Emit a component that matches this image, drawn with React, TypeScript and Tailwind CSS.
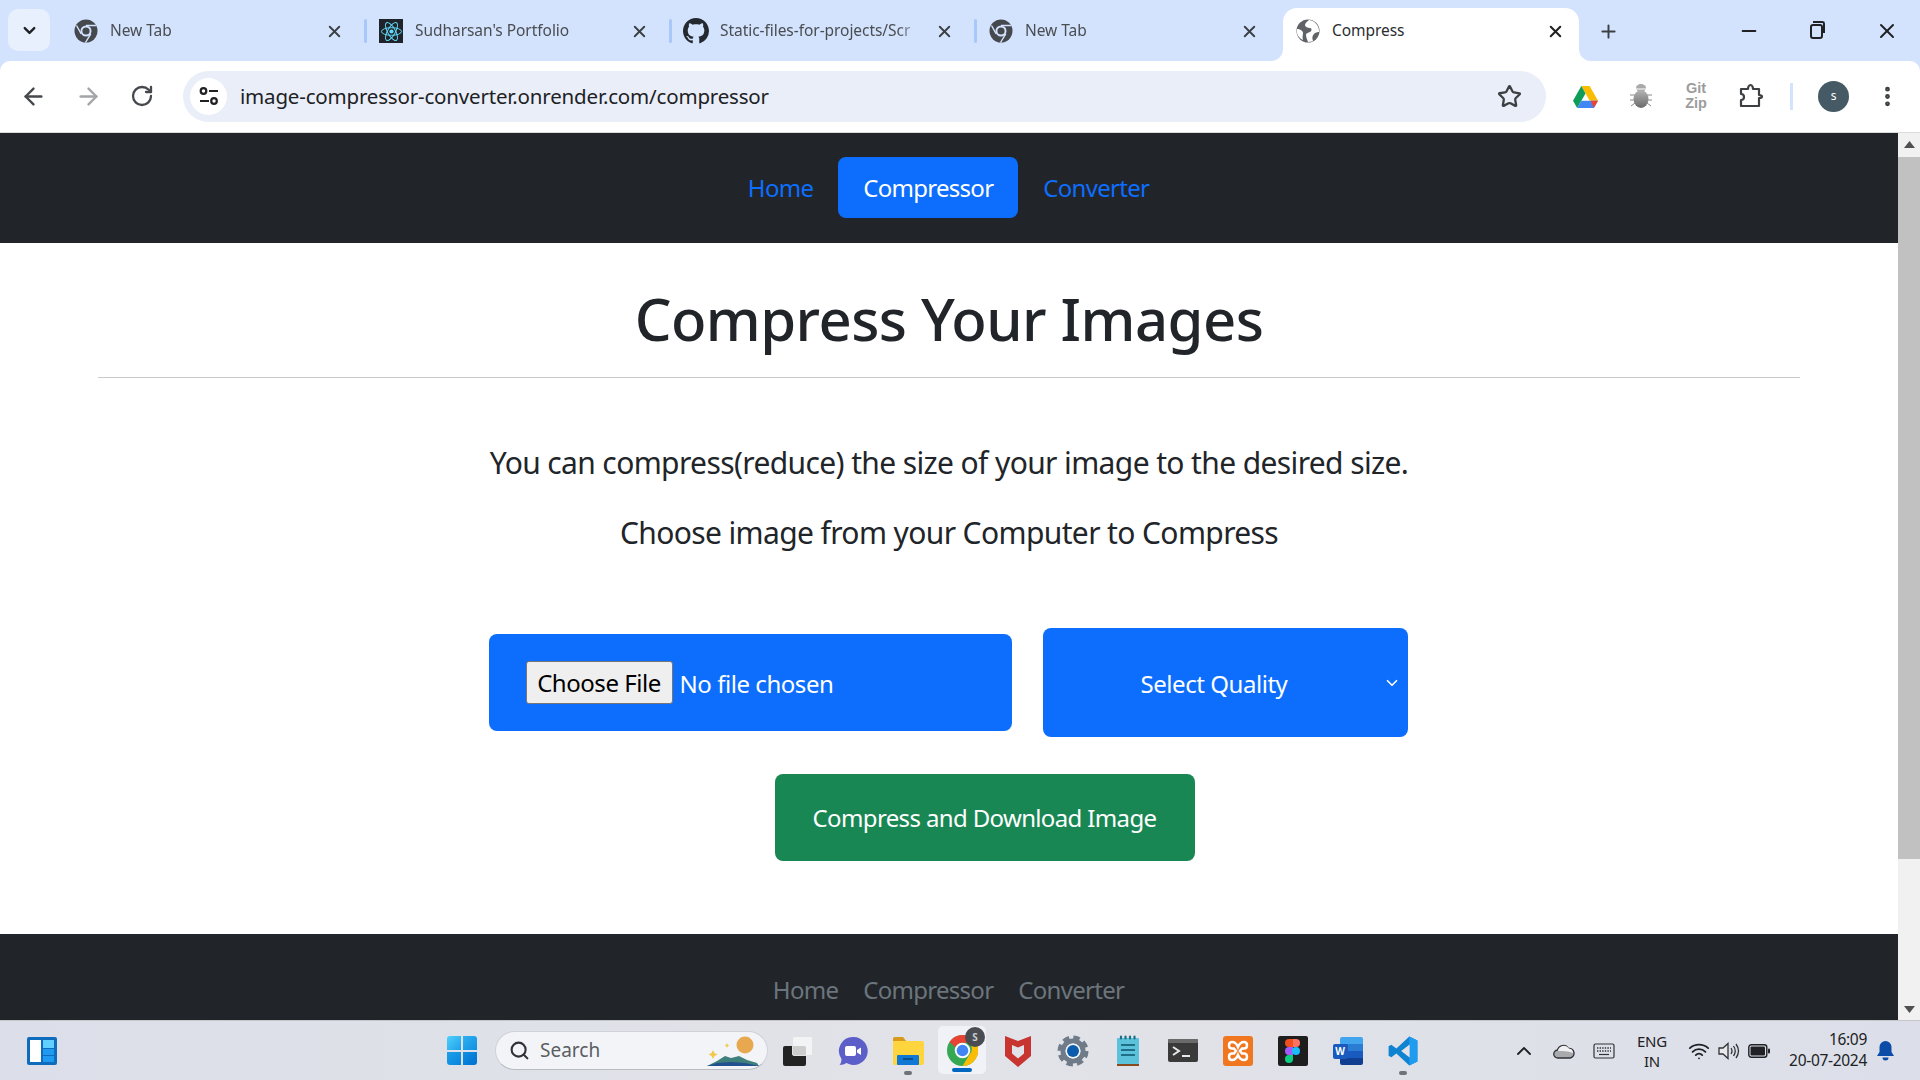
import React from "react";
import { ArrowLeft, ArrowRight, RotateCw, Star, X, Plus, Minus, Search, ChevronUp, ChevronDown, Wifi, EllipsisVertical } from "lucide-react";

const sans = "font-['Noto_Sans','Open_Sans',sans-serif]";

const ChromeIcon = () => (
  <svg width="24" height="24" viewBox="0 0 24 24">
    <circle cx="12" cy="12" r="11.5" fill="#45494e" />
    <circle cx="12" cy="12" r="5.5" fill="#d3e3fd" />
    <circle cx="12" cy="12" r="3.6" fill="#45494e" />
    <path d="M12 6.5h10M7.2 14.8 2.5 6.5M16.8 14.8 11.500 23.500" stroke="#d3e3fd" strokeWidth="1.4" />
  </svg>
);

const ReactIcon = () => (
  <div className="w-[24px] h-[24px] bg-[#20232a] flex items-center justify-center">
    <svg width="23" height="23" viewBox="-12 -12 24 24" fill="none" stroke="#61dafb" strokeWidth="1">
      <circle r="2.2" fill="#61dafb" stroke="none" />
      <ellipse rx="10.500" ry="4" />
      <ellipse rx="10.500" ry="4" transform="rotate(60)" />
      <ellipse rx="10.500" ry="4" transform="rotate(120)" />
    </svg>
  </div>
);

const GithubIcon = () => (
  <svg width="26" height="26" viewBox="0 0 16 16" fill="#24292f">
    <path d="M8 0C3.58 0 0 3.58 0 8c0 3.54 2.29 6.53 5.47 7.59.4.07.55-.17.55-.38 0-.19-.01-.82-.01-1.49-2.01.37-2.53-.49-2.69-.94-.09-.23-.48-.94-.82-1.13-.28-.15-.68-.52-.01-.53.63-.01 1.08.58 1.23.82.72 1.21 1.87.87 2.33.66.07-.52.28-.87.51-1.07-1.78-.2-3.64-.89-3.64-3.95 0-.87.31-1.59.82-2.15-.08-.2-.36-1.02.08-2.12 0 0 .67-.21 2.2.82.64-.18 1.32-.27 2-.27s1.36.09 2 .27c1.53-1.04 2.2-.82 2.2-.82.44 1.1.16 1.92.08 2.12.51.56.82 1.27.82 2.15 0 3.07-1.87 3.75-3.65 3.95.29.25.54.73.54 1.48 0 1.07-.01 1.93-.01 2.2 0 .21.15.46.55.38A8.01 8.01 0 0 0 16 8c0-4.42-3.58-8-8-8z" />
  </svg>
);

const GlobeIcon = () => (
  <svg width="24" height="24" viewBox="0 0 24 24" className="shrink-0">
    <circle cx="12" cy="12" r="11.500" fill="#5f6368" />
    <path d="M13 1c-2 2-4 3-4 5s3 3 5 3 2 3 0 4-4 1-4 3 1 4 2 7c3 0 5-1 5-1-1-3-1-5 1-7s5-2 5-2c.5-5-3-11-10-12zM1 10c3 0 6 2 6 4s-1 4 0 7c-4-2-7-6-6-11z" fill="#ffffff" />
  </svg>
);

const tabs = [
  { title: "New Tab", icon: <ChromeIcon /> },
  { title: "Sudharsan's Portfolio", icon: <ReactIcon /> },
  { title: "Static-files-for-projects/Scr", icon: <GithubIcon /> },
  { title: "New Tab", icon: <ChromeIcon /> },
];

const Tab = ({ title, icon, last }: { title: string; icon: React.ReactNode; last: boolean }) => (
  <div className="w-[305px] h-[53px] flex items-center pl-[11px] pr-[23px] pb-[7px] relative">
    <div className="w-[26px] flex justify-center shrink-0">{icon}</div>
    <span className="ml-[11px] flex-1 overflow-hidden whitespace-nowrap text-[15.5px] tracking-[-0.05px] text-[#4a4d51] [mask-image:linear-gradient(to_right,black_88%,transparent)]">{title}</span>
    <X size={19} strokeWidth={2.4} className="text-[#3c4043] shrink-0 ml-[13px]" />
    {!last && <div className="absolute right-0 top-[11px] w-[3px] h-[24px] rounded bg-[#a8c7fa]" />}
  </div>
);

const DriveIcon = () => (
  <svg width="25" height="23" viewBox="0 0 24 22">
    <path d="M8 1h8l8 14h-8z" fill="#fbbc04" />
    <path d="M8 1 0 15l4 7 8-14z" fill="#0f9d58" />
    <path d="M4 22h16l4-7H8z" fill="#4285f4" />
    <path d="M20 22l4-7h-7z" fill="#ea4335" />
  </svg>
);

const BugIcon = () => (
  <svg width="24" height="26" viewBox="0 0 24 26">
    <defs>
      <linearGradient id="bugBody" x1="0" y1="0" x2="0" y2="1">
        <stop offset="0" stopColor="#b5b5b5" />
        <stop offset="1" stopColor="#6a6a6a" />
      </linearGradient>
    </defs>
    <path d="M1 12h5M1 17h5M2 23l4-3M23 12h-5M23 17h-5M22 23l-4-3" stroke="#8a8a8a" strokeWidth="1" />
    <ellipse cx="12" cy="5" rx="5" ry="4" fill="#a9a9a9" />
    <path d="M7 6h10" stroke="#ffffff" strokeWidth="1" />
    <ellipse cx="12" cy="16" rx="7.500" ry="9" fill="url(#bugBody)" />
  </svg>
);

const ExtensionIcon = () => (
  <svg width="26" height="26" viewBox="0 0 26 26" fill="none" stroke="#3c4043" strokeWidth="2.200" strokeLinejoin="round">
    <path d="M3 6h7c0-2 1-4 2.500-4S15 4 15 6h6v6c2 0 3 .5 3 1.500S23 15 21 15v8H3v-6c2 0 3-1 3-3s-1-3-3-3z" />
  </svg>
);

const TuneIcon = () => (
  <svg width="22" height="22" viewBox="0 0 22 22" fill="none" stroke="#202124" strokeWidth="2.200">
    <circle cx="5.500" cy="6" r="2.800" />
    <path d="M11 6h9M2 16h9" />
    <circle cx="16" cy="16" r="2.800" />
  </svg>
);

const TaskIcon = ({ children, active, dot }: { children: React.ReactNode; active?: boolean; dot?: boolean }) => (
  <div className="w-[55px] h-[55px] flex items-center justify-center relative">
    {active && <div className="absolute left-[3px] top-[3px] w-[48px] h-[48px] bg-[#f0f2f7] rounded-[5px]" />}
    <div className="relative flex items-center justify-center">{children}</div>
    {dot && <div className="absolute bottom-[3px] left-[24px] w-[8px] h-[4px] rounded-full bg-[#6e7279]" />}
    {active && <div className="absolute bottom-[6px] left-[17px] w-[20px] h-[4px] rounded-full bg-[#0067c0]" />}
  </div>
);

const NavLink = ({ label, active }: { label: string; active?: boolean }) => (
  <a className={`h-[61px] px-[25px] pt-[2px] flex items-center rounded-[8px] text-[24px] tracking-[-0.72px] ${active ? "bg-[#0d6efd] text-white" : "text-[#0d6efd]"}`}>
    {label}
  </a>
);

export default function App() {
  return (
    <div className={`w-[1920px] h-[1080px] overflow-hidden flex flex-col bg-white ${sans}`}>
      {/* tab strip */}
      <div className="h-[61px] bg-[#d3e3fd] flex items-end pl-[8px] shrink-0">
        <div className="w-[42px] h-[42px] mb-[10px] mr-[12px] rounded-[10px] bg-[#e9f0fd] flex items-center justify-center">
          <ChevronDown size={19} strokeWidth={3} className="text-[#202124]" />
        </div>
        {tabs.map((t, i) => (
          <Tab key={i} title={t.title} icon={t.icon} last={i === 3} />
        ))}
        <div className="w-[296px] h-[53px] bg-white rounded-t-[14px] flex items-center pl-[13px] pr-[14px] pb-[7px] ml-[1px] relative">
          <div className="absolute -left-[12px] bottom-0 w-[12px] h-[12px] bg-white">
            <div className="w-full h-full bg-[#d3e3fd] rounded-br-[12px]" />
          </div>
          <div className="absolute -right-[12px] bottom-0 w-[12px] h-[12px] bg-white">
            <div className="w-full h-full bg-[#d3e3fd] rounded-bl-[12px]" />
          </div>
          <GlobeIcon />
          <span className="ml-[12px] flex-1 text-[15.5px] tracking-[-0.05px] text-[#2b2d30]">Compress</span>
          <X size={19} strokeWidth={2.6} className="text-[#202124]" />
        </div>
        <div className="h-[53px] flex items-center ml-[19px] pb-[7px]">
          <Plus size={21} strokeWidth={2.2} className="text-[#3c4043]" />
        </div>
        <div className="flex-1" />
        <div className="h-[61px] flex items-center pr-[21px] pb-[0px]">
          <Minus size={22} strokeWidth={2} className="text-[#202124]" />
          <div className="relative w-[13px] h-[15px] border-2 border-[#202124] rounded-[3px] ml-[50px] mt-[2px]">
            <div className="absolute -top-[5px] left-[1px] w-[12px] h-[12px] border-t-2 border-r-2 border-[#202124] rounded-tr-[3px]" />
          </div>
          <X size={24} strokeWidth={2} className="text-[#202124] ml-[52px]" />
        </div>
      </div>
      {/* toolbar */}
      <div className="bg-[#d3e3fd] shrink-0">
        <div className="h-[72px] bg-white rounded-t-[10px] border-b border-[#dcdcdc] flex items-center pb-[1px]">
          <div className="flex items-center gap-[28px] pl-[20px]">
            <ArrowLeft size={27} strokeWidth={2.1} className="text-[#45484c]" />
            <ArrowRight size={27} strokeWidth={2.1} className="text-[#a3a6a9]" />
            <RotateCw size={24} strokeWidth={2.3} className="text-[#45484c]" />
          </div>
          <div className="w-[1363px] h-[51px] ml-[29px] rounded-full bg-[#e9eef8] flex items-center pl-[7px] pr-[22px]">
            <div className="w-[37px] h-[37px] rounded-full bg-white flex items-center justify-center">
              <TuneIcon />
            </div>
            <span className="ml-[13px] flex-1 text-[20.5px] tracking-[-0.18px] text-[#202124]">image-compressor-converter.onrender.com/compressor</span>
            <Star size={25} strokeWidth={2.2} className="text-[#3c4043] -ml-[2px] mr-[2px]" />
          </div>
          <div className="flex items-center ml-[27px]">
            <DriveIcon />
            <div className="ml-[31px]"><BugIcon /></div>
            <div className="ml-[29px] w-[28px] text-[14.5px] leading-[15px] font-bold font-['Liberation_Sans',sans-serif] text-[#9c9c9c] text-center">
              Git
              <br />
              Zip
            </div>
            <div className="ml-[28px]"><ExtensionIcon /></div>
            <div className="w-[3px] h-[27px] bg-[#d3e3fd] ml-[26px]" />
            <div className="w-[31px] h-[31px] rounded-full bg-[#455a64] text-white text-[12px] flex items-center justify-center ml-[25px]">s</div>
            <EllipsisVertical size={25} strokeWidth={2.6} className="text-[#3c4043] ml-[26px]" />
          </div>
        </div>
      </div>
      {/* page + scrollbar */}
      <div className="flex-1 flex min-h-0">
        <div className="flex-1 flex flex-col">
          <nav className="h-[110px] bg-[#212529] flex items-center justify-center pb-[2px] pr-[1px] shrink-0">
            <NavLink label="Home" />
            <NavLink label="Compressor" active />
            <NavLink label="Converter" />
          </nav>
          <main className="flex-1 flex flex-col items-center">
            <h1 className="mt-[36px] text-[58px] leading-[80px] font-medium tracking-[-0.55px] text-[#212529]">Compress Your Images</h1>
            <hr className="w-[1702px] mt-[18px] border-t border-[#c9cacb]" />
            <p className="mt-[63px] text-[30px] leading-[44px] tracking-[-0.62px] text-[#212529]">You can compress(reduce) the size of your image to the desired size.</p>
            <p className="mt-[26px] text-[30px] leading-[44px] tracking-[-0.62px] text-[#212529]">Choose image from your Computer to Compress</p>
            <div className="mt-[73px] mr-[2px] flex items-center gap-[31px] text-white text-[24px] tracking-[-0.45px]">
              <div className="w-[523px] h-[97px] bg-[#0d6efd] rounded-[8px] flex items-center pl-[37px]">
                <div className="w-[147px] h-[43px] bg-[#efefef] border border-[#767676] rounded-[3px] text-black flex items-center justify-center">Choose File</div>
                <span className="ml-[7px] pt-[2px]">No file chosen</span>
              </div>
              <div className="w-[365px] h-[109px] bg-[#0d6efd] rounded-[8px] flex items-center pl-[98px] pr-[7px] justify-between">
                <span className="pt-[2px]">Select Quality</span>
                <ChevronDown size={18} strokeWidth={2.2} />
              </div>
            </div>
            <button className="mt-[37px] ml-[71px] w-[420px] h-[87px] bg-[#198754] rounded-[8px] text-white text-[24px] tracking-[-0.64px]">
              Compress and Download Image
            </button>
          </main>
          <footer className="h-[86px] bg-[#212529] flex items-start justify-center gap-[25px] pt-[38px] pr-[1px] text-[24px] leading-[36px] tracking-[-0.72px] text-[#6c757d] shrink-0">
            <a>Home</a>
            <a>Compressor</a>
            <a>Converter</a>
          </footer>
        </div>
        <div className="w-[22px] bg-[#f1f1f1] flex flex-col items-center">
          <div className="h-[22px] flex items-center justify-center">
            <svg width="11" height="7" viewBox="0 0 11 7"><path d="M5.5 0 11 7H0z" fill="#505050" /></svg>
          </div>
          <div className="w-[22px] h-[702px] bg-[#c1c1c1] mt-[2px]" />
          <div className="flex-1" />
          <div className="h-[22px] flex items-center justify-center">
            <svg width="11" height="7" viewBox="0 0 11 7"><path d="M5.5 7 11 0H0z" fill="#505050" /></svg>
          </div>
        </div>
      </div>
      {/* taskbar */}
      <div className="h-[60px] bg-gradient-to-r from-[#dcdfe9] via-[#e2e3e8] to-[#dcdfe9] border-t border-[#c4c6ca] flex items-center shrink-0">
        <div className="ml-[27px] w-[30px] h-[28px] bg-[#0f6cbd] rounded-[2px] flex gap-[2px] p-[3px]">
          <div className="w-[11px] bg-white" />
          <div className="flex-1 flex flex-col gap-[1px]">
            <div className="flex-1 bg-[#5fd0ff]" />
            <div className="h-[6px] bg-[#1e9bf0]" />
            <div className="h-[6px] bg-[#1e9bf0]" />
          </div>
        </div>
        <div className="ml-[390px] grid grid-cols-2 gap-[2px] w-[30px] h-[29px] shrink-0 rounded-[3px] overflow-hidden">
          <div className="bg-gradient-to-br from-[#4fd0fb] to-[#1ba0ea]" />
          <div className="bg-gradient-to-br from-[#2eb0f0] to-[#1090e2]" />
          <div className="bg-gradient-to-br from-[#1ba0ea] to-[#0a84dc]" />
          <div className="bg-gradient-to-br from-[#1090e2] to-[#0070d0]" />
        </div>
        <div className="ml-[18px] w-[273px] h-[39px] rounded-full bg-[#f3f4f8] border border-[#d0d2d8] border-b-[#b9bbc2] flex items-center pl-[13px] pr-[8px] shrink-0">
          <Search size={21} strokeWidth={2.4} className="text-[#303236]" />
          <span className="ml-[10px] flex-1 text-[19px] text-[#5a5d61]">Search</span>
          <svg width="52" height="30" viewBox="0 0 52 30">
            <circle cx="38" cy="9" r="8.500" fill="#e8a84f" />
            <path d="M6 14l1.500 3 3 1.500-3 1.500L6 23l-1.500-3-3-1.500 3-1.500zM20 7l.8 1.700 1.700.8-1.700.8L20 12l-.8-1.700-1.700-.8 1.700-.8z" fill="#f2c94c" />
            <path d="M0 30 10 25l8-5 6 2 8-2 8 4 10 3 2 3z" fill="#3f7f7c" />
            <path d="M0 30l10-3 14-1 14 1 14 3z" fill="#23508f" />
          </svg>
        </div>
        <div className="ml-[2px] flex items-center">
          <TaskIcon>
            <div className="relative w-[30px] h-[30px]">
              <div className="absolute left-0 bottom-0 w-[23px] h-[20px] bg-[#232323] rounded-[2px]" />
              <div className="absolute right-0 top-0 w-[21px] h-[20px] bg-[#f8f8f8]/80 border border-[#e2e2e2] rounded-[2px]" />
            </div>
          </TaskIcon>
          <TaskIcon>
            <svg width="30" height="30" viewBox="0 0 30 30">
              <path d="M15.500 1a14 14 0 1 1-7 26c-2 1-4 2-7 2 1-1 2-3 2-6a14 14 0 0 1 12-22z" fill="#5d5fc8" />
              <rect x="7" y="10" width="11" height="10" rx="2" fill="#fff" />
              <path d="M19 14l4-2.500v7.500l-4-2.500z" fill="#fff" />
            </svg>
          </TaskIcon>
          <TaskIcon dot>
            <svg width="32" height="28" viewBox="0 0 32 28">
              <path d="M1 2a2 2 0 0 1 2-2h8l3 4h16a2 2 0 0 1 2 2v20a2 2 0 0 1-2 2H3a2 2 0 0 1-2-2z" fill="#ffd53d" />
              <path d="M1 2a2 2 0 0 1 2-2h8l3 4H1z" fill="#d79a1f" />
              <rect x="5" y="18" width="22" height="10" rx="1" fill="#0f78d4" />
              <rect x="11" y="21" width="10" height="2" fill="#0a4f8f" />
            </svg>
          </TaskIcon>
          <TaskIcon active>
            <div className="relative -mt-[1px]">
              <svg width="31" height="31" viewBox="0 0 48 48">
                <circle cx="24" cy="24" r="24" fill="#34a853" />
                <path d="M24 0a24 24 0 0 1 21 12H24a12 12 0 0 0-11 7L4 11A24 24 0 0 1 24 0z" fill="#ea4335" />
                <path d="M45 12a24 24 0 0 1-21 36l11-18a12 12 0 0 0-1-18z" fill="#fbbc04" />
                <circle cx="24" cy="24" r="12" fill="#fff" />
                <circle cx="24" cy="24" r="9" fill="#4285f4" />
              </svg>
              <div className="absolute -top-[8px] -right-[7px] w-[20px] h-[20px] rounded-full bg-[#494d52] text-[#c9cbce] text-[10px] font-bold leading-[20px] text-center">S</div>
            </div>
          </TaskIcon>
          <TaskIcon>
            <svg width="28" height="32" viewBox="0 0 28 32">
              <path d="M1 1l13 5 13-5v20l-13 11L1 21z" fill="#c8342f" />
              <path d="M8 10l6 2.500L20 10v8.500l-6 5-6-5z" fill="#e2e3e8" />
            </svg>
          </TaskIcon>
          <TaskIcon>
            <svg width="32" height="32" viewBox="0 0 32 32" fill="none">
              <circle cx="16" cy="16" r="13" stroke="#6f7b88" strokeWidth="5" strokeDasharray="6.200 4" />
              <circle cx="16" cy="16" r="10" stroke="#6f7b88" strokeWidth="5" />
              <circle cx="16" cy="16" r="7.500" fill="#f3f4f8" />
              <circle cx="16" cy="16" r="6" fill="#0b5cad" />
            </svg>
          </TaskIcon>
          <TaskIcon>
            <svg width="24" height="32" viewBox="0 0 24 32">
              <rect x="1" y="3" width="22" height="26" rx="1" fill="#5cc2dc" />
              <rect x="1" y="29" width="22" height="2" fill="#8a4a1f" />
              <path d="M5 1.500v2M9.500 1.500v2M14 1.500v2M18.500 1.500v2" stroke="#1f6f86" strokeWidth="2.200" strokeLinecap="round" />
              <path d="M5 10h14M5 15h14M5 20h14" stroke="#1f6f86" strokeWidth="2" />
            </svg>
          </TaskIcon>
          <TaskIcon>
            <svg width="30" height="23" viewBox="0 0 30 23">
              <rect width="30" height="23" rx="2" fill="#3a3a3a" />
              <rect width="30" height="4" rx="1" fill="#6a6a6a" />
              <path d="M5 8l6 4-6 4" stroke="#e8e8e8" strokeWidth="2" fill="none" />
              <path d="M14 17h8" stroke="#e8e8e8" strokeWidth="2" />
            </svg>
          </TaskIcon>
          <TaskIcon>
            <svg width="30" height="30" viewBox="0 0 30 30">
              <rect width="30" height="30" rx="3" fill="#f0761f" />
              <path d="M9 6c-4 0-4 6.500 0 6.500h2l2 2.500-2 2.500H9c-4 0-4 6.500 0 6.500 3 0 5-2.500 6-5 1 2.500 3 5 6 5 4 0 4-6.500 0-6.500h-2l-2-2.500 2-2.500h2c4 0 4-6.500 0-6.500-3 0-5 2.500-6 5-1-2.500-3-5-6-5z" stroke="#ffffff" strokeWidth="2.500" fill="none" />
            </svg>
          </TaskIcon>
          <TaskIcon>
            <div className="w-[30px] h-[30px] bg-[#1e1e1e] rounded-[2px] flex items-center justify-center">
              <svg width="15" height="24" viewBox="0 0 15 24">
                <path d="M0 4a4 4 0 0 1 4-4h4v8H4a4 4 0 0 1-4-4z" fill="#f24e1e" />
                <path d="M8 0h3a4 4 0 0 1 0 8H8z" fill="#ff7262" />
                <path d="M0 12a4 4 0 0 1 4-4h4v8H4a4 4 0 0 1-4-4z" fill="#a259ff" />
                <circle cx="11" cy="12" r="4" fill="#1abcfe" />
                <path d="M4 16h4v4a4 4 0 1 1-4-4z" fill="#0acf83" />
              </svg>
            </div>
          </TaskIcon>
          <TaskIcon>
            <div className="relative w-[30px] h-[28px]">
              <div className="absolute right-0 top-0 w-[23px] h-[28px] rounded-[2px] overflow-hidden flex flex-col">
                <div className="flex-1 bg-[#41a5ee]" />
                <div className="flex-1 bg-[#2b7cd3]" />
                <div className="flex-1 bg-[#185abd]" />
                <div className="flex-1 bg-[#103f91]" />
              </div>
              <div className="absolute left-0 top-[7px] w-[15px] h-[15px] bg-[#185abd] rounded-[2px] text-white text-[10px] font-bold leading-[15px] text-center">W</div>
            </div>
          </TaskIcon>
          <TaskIcon dot>
            <svg width="30" height="30" viewBox="0 0 100 100">
              <path d="M71 2 98 15v70L71 98 28 58 11 71 2 66V34l9-5 17 13z" fill="#0f82d0" />
              <path d="M71 2 98 15v70L71 98z" fill="#1f9cf0" />
              <path d="M72 28 44 50l28 22z" fill="#e2e3e8" />
            </svg>
          </TaskIcon>
        </div>
        <div className="flex-1" />
        <div className="flex items-center text-[#202124]">
          <ChevronUp size={24} strokeWidth={1.8} />
          <svg width="22" height="16" viewBox="0 0 22 16" className="ml-[17px]">
            <path d="M5 15a4 4 0 0 1-.5-8 6 6 0 0 1 11-1.500A4.500 4.500 0 0 1 17 15z" fill="#a8aaae" stroke="#303236" strokeWidth="1.300" />
            <path d="M5 8a6 6 0 0 1 11-2.500A4.500 4.500 0 0 1 20 10c-5-2-10-2-15-2z" fill="#f0f0f2" />
          </svg>
          <svg width="22" height="16" viewBox="0 0 22 16" fill="none" stroke="#303236" className="ml-[18px]">
            <rect x="1" y="1" width="20" height="14" rx="1.500" strokeWidth="1.200" />
            <path d="M4 5h14M4 8h14" strokeWidth="1.400" strokeDasharray="1.400 1.200" />
            <path d="M6 11.500h10" strokeWidth="1.200" />
          </svg>
          <div className="ml-[18px] w-[38px] text-[15px] leading-[20px] text-center tracking-[-0.2px]">ENG<br />IN</div>
          <Wifi size={22} strokeWidth={2} className="ml-[17px]" />
          <svg width="22" height="18" viewBox="0 0 22 18" fill="none" stroke="#303236" strokeWidth="1.300" className="ml-[8px]">
            <path d="M1 6h4l5-4.500v15L5 12H1z" fill="#e8e8ea" />
            <path d="M13 6q2 3 0 6M15.500 4q3.500 5 0 10M18 2q5 7 0 14" />
          </svg>
          <svg width="22" height="14" viewBox="0 0 22 14" className="ml-[8px]">
            <rect x=".8" y=".8" width="18" height="12.400" rx="2.500" fill="none" stroke="#202124" strokeWidth="1.400" />
            <rect x="2.500" y="2.500" width="14.500" height="9" rx="1" fill="#202124" />
            <rect x="20" y="4.500" width="2" height="5" rx="1" fill="#202124" />
          </svg>
          <div className="ml-[17px] w-[80px] text-[15.5px] leading-[21px] text-right tracking-[-0.3px] -mt-[2px]">16:09<br />20-07-2024</div>
          <svg width="17" height="20" viewBox="0 0 17 20" className="ml-[10px] mr-[26px]">
            <path d="M8.500 0a6 6 0 0 1 6 6v5l2.500 4H0l2.500-4V6a6 6 0 0 1 6-6z" fill="#0b4ca8" />
            <path d="M5.500 16.500h6a3 3 0 0 1-6 0z" fill="#0b4ca8" />
          </svg>
        </div>
      </div>
    </div>
  );
}
